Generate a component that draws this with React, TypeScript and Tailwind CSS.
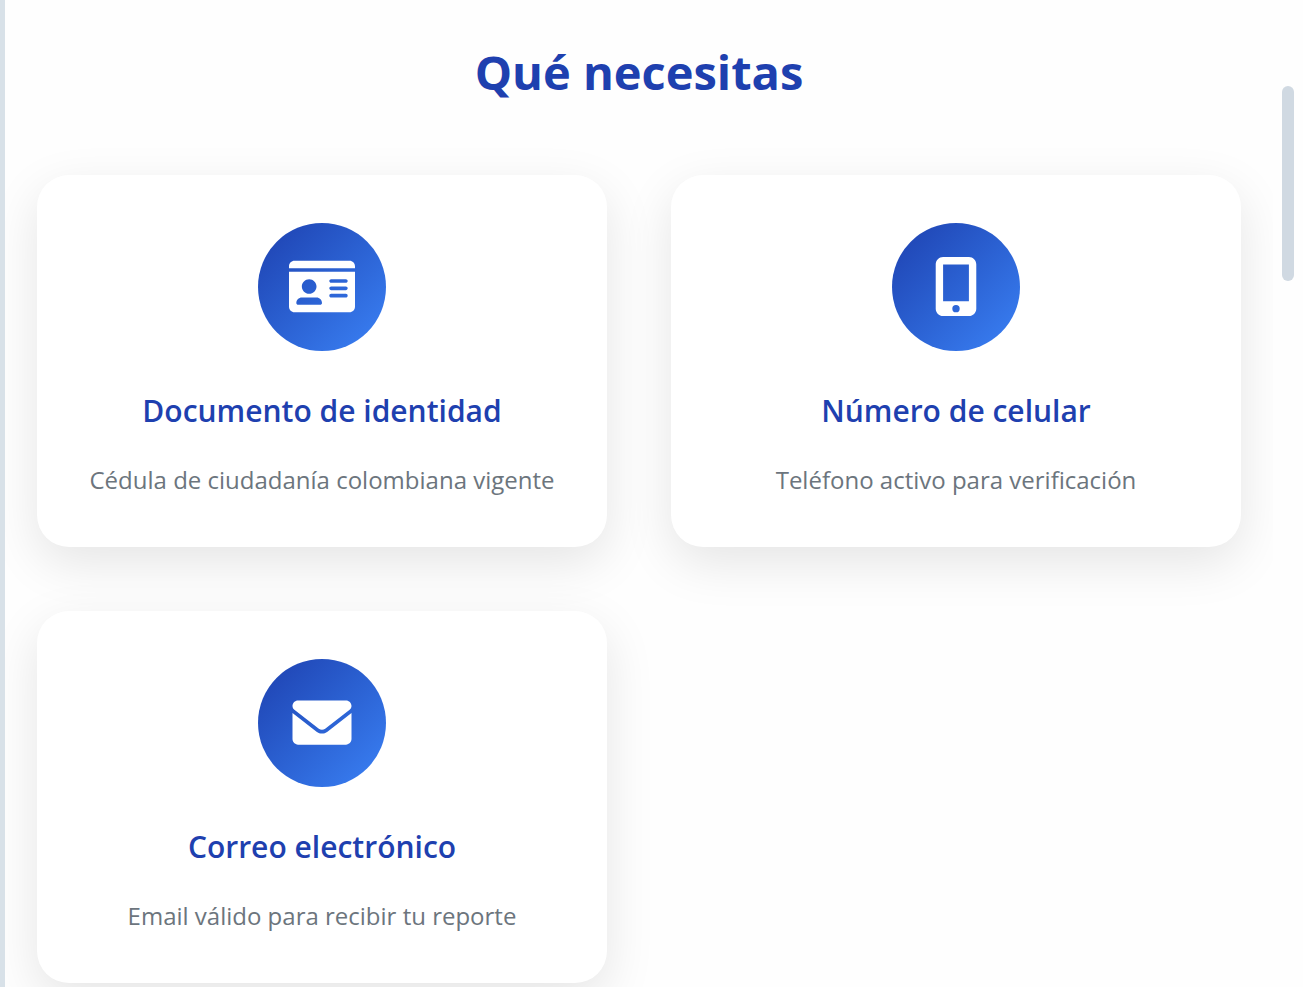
import React from 'react';
import type { ComponentType } from 'react';
import { FaMobileScreenButton } from 'react-icons/fa6';

interface IconProps {
  className?: string;
}

interface Requirement {
  icon: ComponentType<IconProps>;
  title: string;
  description: string;
}

function IdCardIcon({ className }: IconProps) {
  return (
    <svg className={className} viewBox="0 0 576 512" fill="currentColor" aria-hidden="true">
      <path d="M528 32h-480C21.49 32 0 53.49 0 80V96h576V80C576 53.49 554.5 32 528 32zM0 432C0 458.5 21.49 480 48 480h480c26.51 0 48-21.49 48-48V128H0V432zM368 192h128C504.8 192 512 199.2 512 208S504.8 224 496 224h-128C359.2 224 352 216.8 352 208S359.2 192 368 192zM368 256h128C504.8 256 512 263.2 512 272S504.8 288 496 288h-128C359.2 288 352 280.8 352 272S359.2 256 368 256zM368 320h128c8.836 0 16 7.164 16 16S504.8 352 496 352h-128c-8.836 0-16-7.164-16-16S359.2 320 368 320zM176 192c35.35 0 64 28.66 64 64s-28.65 64-64 64s-64-28.66-64-64S140.7 192 176 192zM112 352h128c26.51 0 48 21.49 48 48c0 8.836-7.164 16-16 16h-192C71.16 416 64 408.8 64 400C64 373.5 85.49 352 112 352z" />
    </svg>
  );
}

function EnvelopeIcon({ className }: IconProps) {
  return (
    <svg className={className} viewBox="0 0 512 512" fill="currentColor" aria-hidden="true">
      <path d="M256 352c-16.53 0-33.06-5.422-47.16-16.41L0 173.2V400C0 426.5 21.49 448 48 448h416c26.51 0 48-21.49 48-48V173.2l-208.8 162.5C289.1 346.6 272.5 352 256 352zM16.29 145.3l212.2 165.1c16.19 12.6 38.87 12.6 55.06 0l212.2-165.1C505.1 137.3 512 125 512 112C512 85.49 490.5 64 464 64h-416C21.49 64 0 85.49 0 112C0 125 6.01 137.3 16.29 145.3z" />
    </svg>
  );
}

const requirements: Requirement[] = [
  {
    icon: IdCardIcon,
    title: 'Documento de identidad',
    description: 'Cédula de ciudadanía colombiana vigente',
  },
  {
    icon: FaMobileScreenButton,
    title: 'Número de celular',
    description: 'Teléfono activo para verificación',
  },
  {
    icon: EnvelopeIcon,
    title: 'Correo electrónico',
    description: 'Email válido para recibir tu reporte',
  },
];

function RequirementCard({ icon: Icon, title, description }: Requirement) {
  return (
    <article className="flex flex-col items-center rounded-4xl bg-white px-10 py-12 text-center shadow-[0_16px_50px_rgba(0,0,0,0.1)]">
      <div className="mb-8 flex size-32 items-center justify-center rounded-full bg-linear-135 from-[#1e40af] to-[#3b82f6] pb-px text-white">
        <Icon className="h-[59px] w-[66px]" />
      </div>
      <h3 className="mb-[22px] text-[30px] leading-14 font-semibold text-[#1e40af]">{title}</h3>
      <p className="text-[24px] leading-[38px] text-[#6c757d]">{description}</p>
    </article>
  );
}

export default function App() {
  return (
    <div className="flex h-screen overflow-hidden bg-[#fefefe] font-['Open_Sans','Segoe_UI',sans-serif]">
      <div className="w-[5px] shrink-0 bg-[#d8e1e8]" />
      <section className="min-w-0 flex-1 overflow-hidden px-8 pt-9">
        <h2 className="mb-[67px] text-center text-[47px] leading-[72px] font-bold text-[#1e40af]">
          Qué necesitas
        </h2>
        <div className="grid grid-cols-1 gap-16 md:grid-cols-2">
          {requirements.map((item) => (
            <RequirementCard key={item.title} {...item} />
          ))}
        </div>
      </section>
      <div className="w-[30px] shrink-0 pt-[86px] pl-[9px]">
        <div className="h-[195px] w-3 rounded-full bg-[#d0d9e2]" />
      </div>
    </div>
  );
}
